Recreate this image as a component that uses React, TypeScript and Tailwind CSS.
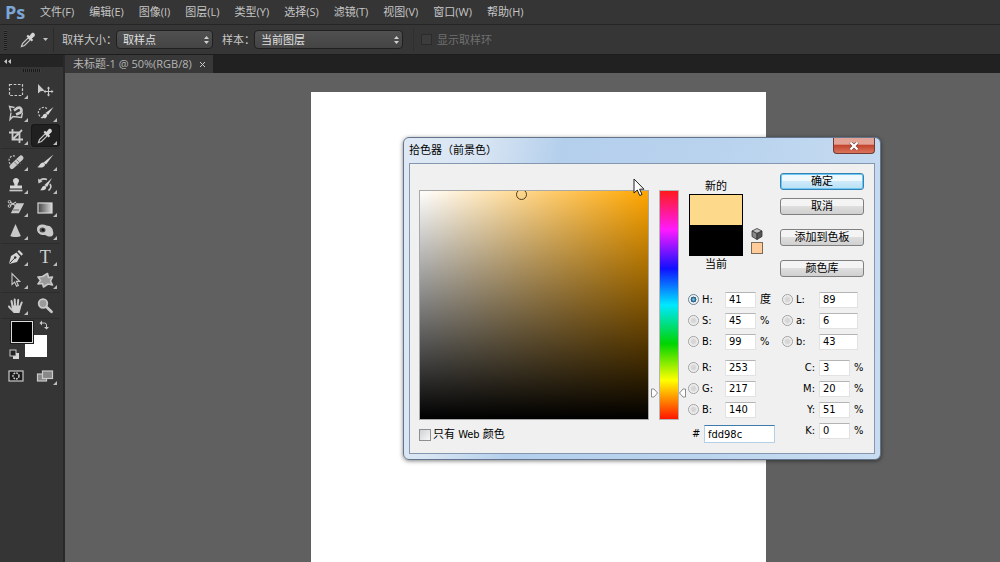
import { useState } from "react";
import type { ReactNode } from "react";

const menus = [
  "文件(F)",
  "编辑(E)",
  "图像(I)",
  "图层(L)",
  "类型(Y)",
  "选择(S)",
  "滤镜(T)",
  "视图(V)",
  "窗口(W)",
  "帮助(H)",
];

const Icon = ({ children }: { children: ReactNode }) => (
  <svg width="20" height="20" viewBox="0 0 20 20" fill="none" stroke="#c9c9c9" strokeWidth="1.4">
    {children}
  </svg>
);

const EyedropperIcon = () => (
  <Icon>
    <path d="M3.5 16.5l1-3 5.7-5.7 2 2-5.7 5.7-3 1z" strokeWidth="1.2" />
    <path d="M8.5 6.2l1.4-1.4 1.5 1.2 2.2-2.8c1.8-1.3 4.3 1.1 2.9 3l-2.6 2.3 1.2 1.5-1.4 1.4z" fill="#d6d6d6" stroke="none" />
  </Icon>
);

const toolGroups: { name: string; corner?: boolean; active?: boolean; icon: ReactNode }[][] = [
  [
    {
      name: "矩形选框工具",
      corner: true,
      icon: (
        <Icon>
          <rect x="3.5" y="4.5" width="13" height="11" strokeDasharray="2.6 1.6" strokeWidth="1.2" />
        </Icon>
      ),
    },
    {
      name: "移动工具",
      icon: (
        <Icon>
          <path d="M3 4v9.5l2.6-2.2 4-.6z" fill="#c9c9c9" stroke="none" />
          <path d="M13.5 7.5v8M9.5 11.5h8" strokeWidth="1.1" />
          <path d="M11.8 8.5l1.7-2 1.7 2zM11.8 14.5l1.7 2 1.7-2zM10.5 9.8l-2 1.7 2 1.7zM16.5 9.8l2 1.7-2 1.7z" fill="#c9c9c9" stroke="none" />
        </Icon>
      ),
    },
    {
      name: "磁性套索工具",
      corner: true,
      icon: (
        <Icon>
          <path d="M8.500 4.500L3.500 3.500l1.500 5M5 9.500L4 16.500l3-3 8.500 1 1-5" />
          <path d="M8 7.500l3.500-2.500c3.500-1.500 5.500 3 2.500 4.800L10 11.500" strokeWidth="2.600" />
        </Icon>
      ),
    },
    {
      name: "快速选择工具",
      corner: true,
      icon: (
        <Icon>
          <path d="M12 5.5C8 2.5 2.5 6 3.5 10.5S9 16 11 14" strokeDasharray="2 1.4" strokeWidth="1.2" />
          <path d="M18.5 4L13 12l-2.500-2z" fill="#d6d6d6" stroke="none" />
          <path d="M6 14.8c2 0 1.3-4.8 4.8-4 2.700 1 1.600 5.300-4.800 4z" fill="#d6d6d6" stroke="none" />
        </Icon>
      ),
    },
    {
      name: "裁剪工具",
      corner: true,
      icon: (
        <Icon>
          <path d="M6.5 3v10.5H17M3 6.5h10.5V17M6.5 13.5L16 4" strokeWidth="1.8" />
        </Icon>
      ),
    },
    { name: "吸管工具", corner: true, active: true, icon: <EyedropperIcon /> },
  ],
  [
    {
      name: "污点修复画笔工具",
      corner: true,
      icon: (
        <Icon>
          <path d="M9 4C4 3 1.5 8 4 12" strokeDasharray="2 1.4" strokeWidth="1.1" />
          <path d="M6 14.5L15 6" strokeWidth="5" strokeLinecap="round" />
          <path d="M8 9.5l4 4M10.5 7.5l4 4" stroke="#777777" strokeWidth="1" />
        </Icon>
      ),
    },
    {
      name: "画笔工具",
      corner: true,
      icon: (
        <Icon>
          <path d="M18.5 2.5l-7.500 10-2.500-2z" fill="#d6d6d6" stroke="none" />
          <path d="M2 15c3 0 2.500-4.800 6.500-4.500 3.500 1.800.8 6.700-6.500 4.500z" fill="#d6d6d6" stroke="none" />
        </Icon>
      ),
    },
    {
      name: "仿制图章工具",
      corner: true,
      icon: (
        <Icon>
          <path d="M8.5 10.5C8.6 8 6.8 7.5 7 5.5 7.2 2 12.8 2 13 5.5c.2 2-1.6 2.500-1.500 5h4.500v3H4v-3z" fill="#d6d6d6" stroke="none" />
          <path d="M3.5 15.500h13" strokeWidth="1.700" />
        </Icon>
      ),
    },
    {
      name: "历史记录画笔工具",
      corner: true,
      icon: (
        <Icon>
          <path d="M17 3l-5 9-2.500-2z" fill="#d6d6d6" stroke="none" />
          <path d="M4.5 15c2.500 0 2-4.800 5.500-4.300 2.600 1.300 1 5.800-5.500 4.300z" fill="#d6d6d6" stroke="none" />
          <path d="M4 7c1.5-3 5-3.5 8-2.5M15 9c1.5 2.5.5 5-1.5 6.5" strokeWidth="1.6" />
          <path d="M3 3.5l.5 5 4-2z" fill="#c9c9c9" stroke="none" />
        </Icon>
      ),
    },
    {
      name: "背景橡皮擦工具",
      corner: true,
      icon: (
        <Icon>
          <path d="M10.5 6H17l-4.500 8.500H6z" fill="#c9c9c9" />
          <path d="M7 12h6" stroke="#666666" strokeWidth="1" />
          <path d="M4 7.500L10 4M4 4l6 4" strokeWidth="1.100" />
          <circle cx="3.5" cy="3.8" r="1.3" strokeWidth="1" />
          <circle cx="3.5" cy="8" r="1.3" strokeWidth="1" />
        </Icon>
      ),
    },
    {
      name: "渐变工具",
      corner: true,
      icon: (
        <Icon>
          <defs>
            <linearGradient id="toolGradient">
              <stop offset="0" stopColor="#444444" />
              <stop offset="1" stopColor="#d8d8d8" />
            </linearGradient>
          </defs>
          <rect x="3" y="5" width="14" height="10" fill="url(#toolGradient)" stroke="#d8d8d8" strokeWidth="1.2" />
        </Icon>
      ),
    },
    {
      name: "锐化工具",
      corner: true,
      icon: (
        <Icon>
          <path d="M9.5 3L14.800 15c-2 1.400-8.400 1.400-10.500 0z" fill="#c9c9c9" stroke="none" />
        </Icon>
      ),
    },
    {
      name: "海绵工具",
      corner: true,
      icon: (
        <Icon>
          <path d="M2 8C2 3.500 8 2.500 11.500 4.500c4 0 6.500 3 6.500 6 1 3-.5 5-3 5-2 .5-3-1-5-1.500C6 14.500 2 12.500 2 8z" fill="#c9c9c9" stroke="none" />
          <ellipse cx="7.500" cy="9" rx="3" ry="2.500" fill="#4a4a4a" stroke="none" />
          <circle cx="8" cy="9" r="1.300" fill="#161616" stroke="none" />
        </Icon>
      ),
    },
  ],
  [
    {
      name: "钢笔工具",
      corner: true,
      icon: (
        <Icon>
          <path d="M3 17l2-8 5.5-3.5 3.500 4L11 15z" fill="#d6d6d6" stroke="none" />
          <path d="M11.5 4.500L13 3l4 4-1.500 1.800z" fill="#d6d6d6" stroke="none" />
          <path d="M3.5 16.500L9 10.800" stroke="#333333" strokeWidth="1" />
          <circle cx="9.200" cy="10.500" r="1.200" fill="#333333" stroke="none" />
        </Icon>
      ),
    },
    {
      name: "横排文字工具",
      corner: true,
      icon: <span className="font-['Liberation_Serif',serif] text-[18px] leading-5 text-[#d0d0d0]">T</span>,
    },
    {
      name: "直接选择工具",
      corner: true,
      icon: (
        <Icon>
          <path d="M6 3.5v11l2.6-2.4 2 4.2 1.8-.9-2-4h3.4z" strokeWidth="1.1" />
        </Icon>
      ),
    },
    {
      name: "自定形状工具",
      corner: true,
      icon: (
        <Icon>
          <path d="M7.5 6.500L12.500 3.500l1 4 4-.5-2 4 2 4-4.500-1-4.500 3-1-3.500-4.500.5 2.500-3.500L3 7z" fill="#999999" strokeWidth="1.600" strokeLinejoin="round" />
        </Icon>
      ),
    },
  ],
  [
    {
      name: "抓手工具",
      corner: true,
      icon: (
        <Icon>
          <path d="M8 16c-1.5-2-4-3.500-5-5.500" strokeWidth="2" strokeLinecap="round" />
          <path d="M6.500 10L5.500 5M9 9.500L8.700 3.500M11.700 9.500l.5-5.500M14.200 10.500l1.500-4" strokeWidth="2" strokeLinecap="round" />
          <path d="M5.500 9.500h9.500c.3 3-1 4.500-1.500 7.500H8c-.5-2-2.500-3-2.500-7.500z" fill="#d0d0d0" stroke="none" />
        </Icon>
      ),
    },
    {
      name: "缩放工具",
      icon: (
        <Icon>
          <circle cx="8" cy="7.500" r="4.300" fill="#9a9a9a" strokeWidth="1.800" />
          <path d="M11.500 11l5 4.800" strokeWidth="2.800" strokeLinecap="round" />
        </Icon>
      ),
    },
  ],
];

const Corner = () => (
  <span className="absolute right-[3px] bottom-[2px] border-[2px] border-transparent border-r-[#bdbdbd] border-b-[#bdbdbd]" />
);

const ToolsPanel = () => (
  <aside className="flex w-[65px] shrink-0 flex-col border-r-2 border-[#292929] bg-[#353535]">
    <button type="button" aria-label="折叠面板" className="flex h-3 items-center bg-[#242424] pl-1">
      <svg width="7" height="5" viewBox="0 0 7 5" fill="#c4c4c4">
        <path d="M3 0v5L0 2.500zM7 0v5L4 2.500z" />
      </svg>
    </button>
    <div className="mx-auto mt-[2px] mb-[6px] h-[3px] w-[18px] bg-[repeating-linear-gradient(90deg,#181818_0_1px,#3d3d3d_1px_2px)]" />
    <div className="flex flex-col gap-px pr-[3px] pl-px">
      {toolGroups.map((group, i) => (
        <div key={i} className="grid grid-cols-2 border-b border-[#2c2c2c] pb-px">
          {group.map((tool) => (
            <button
              key={tool.name}
              type="button"
              title={tool.name}
              className={
                tool.active
                  ? "relative flex h-[23px] items-center justify-center rounded-sm bg-[#202020] inset-ring inset-ring-[#171717]"
                  : "relative flex h-[23px] items-center justify-center"
              }
            >
              {tool.icon}
              {tool.corner && <Corner />}
            </button>
          ))}
        </div>
      ))}
    </div>
    <div className="relative mt-px ml-[9px] h-[40px] w-[40px]">
      <button type="button" aria-label="背景色" className="absolute top-[15px] left-4 size-[22px] bg-white" />
      <button
        type="button"
        aria-label="前景色"
        className="absolute top-px left-[2px] size-[22px] border border-[#dcdcdc] bg-black outline outline-[#1c1c1c]"
      />
      <button type="button" aria-label="切换前景色和背景色" className="absolute top-0 right-0">
        <svg width="10" height="10" viewBox="0 0 10 10" fill="none" stroke="#c9c9c9">
          <path d="M2 3h3.500q2 0 2 2v3" />
          <path d="M3 .5L.5 3 3 5.500zM5 7l2.500 2.500L10 7z" fill="#c9c9c9" stroke="none" />
        </svg>
      </button>
      <button type="button" aria-label="默认颜色" className="absolute bottom-0 left-0">
        <svg width="11" height="11" viewBox="0 0 11 11">
          <rect x="4" y="4" width="6" height="6" fill="#d8d8d8" />
          <rect x="1" y="1" width="6" height="6" fill="#222222" stroke="#c9c9c9" />
        </svg>
      </button>
    </div>
    <div className="mt-[5px] grid grid-cols-2 pr-[3px] pl-px">
      <button type="button" title="快速蒙版" className="flex h-[22px] items-center justify-center">
        <Icon>
          <rect x="3" y="5" width="14" height="10" fill="#1c1c1c" strokeWidth="1.2" />
          <circle cx="10" cy="10" r="3" strokeDasharray="1.8 1" strokeWidth="1.5" />
        </Icon>
      </button>
      <button type="button" title="屏幕模式" className="relative flex h-[22px] items-center justify-center">
        <Icon>
          <rect x="2.5" y="8" width="9" height="7" fill="#888888" strokeWidth="1.2" />
          <rect x="7.5" y="5" width="10" height="7.5" fill="#888888" strokeWidth="1.2" />
        </Icon>
        <Corner />
      </button>
    </div>
  </aside>
);

const Spinner = () => (
  <svg className="pointer-events-none absolute top-[6px] right-1" width="5" height="8" viewBox="0 0 5 8" fill="#d0d0d0">
    <path d="M0 3l2.5-3L5 3zM0 5l2.5 3L5 5z" />
  </svg>
);

const OptionsBar = () => (
  <div className="flex h-[31px] items-center border-y border-t-[#252525] border-b-[#1d1d1d] bg-[#363636] pl-1 whitespace-nowrap text-[#c8c8c8]">
    <span className="h-5 w-[3px] bg-[repeating-linear-gradient(0deg,#1c1c1c_0_1px,#404040_1px_2px)]" />
    <button type="button" aria-label="吸管工具预设" className="ml-[11px] flex items-center">
      <EyedropperIcon />
      <svg className="ml-[5px]" width="5" height="3" viewBox="0 0 5 3" fill="#c4c4c4">
        <path d="M0 0h5L2.5 3z" />
      </svg>
    </button>
    <span className="ml-[5px] h-6 w-px bg-[#2a2a2a]" />
    <label htmlFor="sampleSize" className="ml-2 w-[54px]">
      取样大小：
    </label>
    <div className="relative">
      <select
        id="sampleSize"
        className="h-[19px] w-[97px] appearance-none rounded-sm border border-[#202020] bg-linear-to-b from-[#505050] to-[#444444] px-[6px] text-[#e0e0e0]"
      >
        <option>取样点</option>
      </select>
      <Spinner />
    </div>
    <label htmlFor="sample" className="ml-[9px] w-8">
      样本：
    </label>
    <div className="relative">
      <select
        id="sample"
        className="h-[19px] w-[149px] appearance-none rounded-sm border border-[#202020] bg-linear-to-b from-[#505050] to-[#444444] px-[6px] text-[#e0e0e0]"
      >
        <option>当前图层</option>
      </select>
      <Spinner />
    </div>
    <span className="ml-[10px] h-6 w-px bg-[#2f2f2f]" />
    <label className="ml-[7px] flex items-center gap-[5px] text-[#707070]">
      <input type="checkbox" disabled className="size-[11px] appearance-none border border-[#2b2b2b] bg-[#3c3c3c]" />
      显示取样环
    </label>
  </div>
);

type Channel = { id: string; label: string; value: string; unit?: string; radio?: boolean };

const leftGroups: Channel[][] = [
  [
    { id: "hue", label: "H:", value: "41", unit: "度", radio: true },
    { id: "sat", label: "S:", value: "45", unit: "%", radio: true },
    { id: "bri", label: "B:", value: "99", unit: "%", radio: true },
  ],
  [
    { id: "red", label: "R:", value: "253", radio: true },
    { id: "green", label: "G:", value: "217", radio: true },
    { id: "blue", label: "B:", value: "140", radio: true },
  ],
];

const labChannels: Channel[] = [
  { id: "labL", label: "L:", value: "89", radio: true },
  { id: "labA", label: "a:", value: "6", radio: true },
  { id: "labB", label: "b:", value: "43", radio: true },
];

const cmykChannels: Channel[] = [
  { id: "cyan", label: "C:", value: "3", unit: "%" },
  { id: "magenta", label: "M:", value: "20", unit: "%" },
  { id: "yellow", label: "Y:", value: "51", unit: "%" },
  { id: "key", label: "K:", value: "0", unit: "%" },
];

const ChannelRow = ({
  channel,
  selected,
  onSelect,
  wide,
}: {
  channel: Channel;
  selected: string;
  onSelect: (id: string) => void;
  wide?: boolean;
}) => (
  <div className="flex h-[21px] items-center">
    {channel.radio && (
      <input
        type="radio"
        name="channel"
        aria-label={channel.label}
        checked={selected === channel.id}
        onChange={() => onSelect(channel.id)}
        className="mr-[3px] size-[11px] appearance-none rounded-full border border-[#a0a0a0] bg-[radial-gradient(#d6d6d6_30%,#f6f6f6_70%)] checked:border-[#6d8295] checked:bg-[radial-gradient(circle,#6fc3ea_0_8%,#1d4566_42%,#eef4f8_50%)]"
      />
    )}
    <label htmlFor={channel.id} className={channel.radio ? "w-[23px]" : "w-[27px] pr-[4px] text-right"}>
      {channel.label}
    </label>
    <input
      id={channel.id}
      defaultValue={channel.value}
      className={
        wide
          ? "h-4 w-[39px] border border-[#e2e2e2] border-t-[#b4b4b4] bg-white pl-[3px]"
          : "h-4 w-[31px] border border-[#e2e2e2] border-t-[#b4b4b4] bg-white pl-[3px]"
      }
    />
    {channel.unit && <span className="ml-1">{channel.unit}</span>}
  </div>
);

const dialogButton =
  "h-[17px] w-[84px] rounded-[3px] border border-[#808080] bg-linear-to-b from-[#f4f4f4] from-45% via-[#dedede] via-50% to-[#d0d0d0] leading-4";

const ColorPicker = () => {
  const [selected, setSelected] = useState("hue");
  const [hex, setHex] = useState("fdd98c");

  return (
    <section
      role="dialog"
      aria-labelledby="pickerTitle"
      className="absolute top-[64px] left-[338px] rounded-[6px] border border-[#62758c] bg-[linear-gradient(100deg,#dfe9f5_0%,#d8e5f3_15%,#b4cfec_30%,#b9d3ee_60%,#c8dcf1_100%)] px-[5px] pb-[5px] font-['DejaVu_Sans_Condensed','Noto_Sans_CJK_SC',sans-serif] text-black shadow-[0_1px_4px_rgba(0,0,0,0.5)]"
    >
      <header className="flex h-[25px] items-start justify-between">
        <h1 id="pickerTitle" className="leading-[26px]">
          拾色器（前景色）
        </h1>
        <button
          type="button"
          aria-label="关闭"
          className="flex h-4 w-[42px] items-center justify-center rounded-b-[4px] border border-t-0 border-[#713a35] bg-linear-to-b from-[#e3a498] from-40% via-[#c4452e] via-50% to-[#d9755c]"
        >
          <svg width="10" height="8" viewBox="0 0 10 8" stroke="#ffffff" strokeWidth="2.2">
            <path d="M1.5 .5l7 7M8.5 .5l-7 7" stroke="#6b4742" strokeWidth="3.4" />
            <path d="M1.5 .5l7 7M8.5 .5l-7 7" />
          </svg>
        </button>
      </header>

      <div className="flex h-[291px] w-[466px] items-start border border-[#8497ae] bg-[#f0f0f0] pl-[9px]">
        <div className="pt-[26px]">
          <div className="relative size-[230px] overflow-hidden border border-[#a9a9a9] bg-[linear-gradient(to_top,#000,transparent),linear-gradient(to_right,#fff,#ffa600)]">
            <span className="absolute -top-[2px] left-24 size-[11px] rounded-full border border-[#4c3a1c]" />
          </div>
          <label className="mt-2 flex h-[13px] items-center gap-[2px]">
            <input
              type="checkbox"
              className="size-3 appearance-none border border-[#8e8f8f] bg-linear-to-br from-[#cfd2d6] to-[#f7f7f7]"
            />
            只有 Web 颜色
          </label>
        </div>

        <div className="relative mt-[26px] ml-[10px] h-[230px] w-5 border border-[#b5b5b5] bg-[linear-gradient(to_bottom,#ff1a1a_0%,#ff1aff_17%,#1010ff_34%,#00e8ff_50%,#00d400_67%,#ffff00_83%,#ff1500_100%)]">
          <svg className="absolute top-[197px] -left-[9px]" width="7" height="10" viewBox="0 0 7 10" fill="#ffffff" stroke="#8c8c8c">
            <path d="M.5 1H3l3.500 4L3 9H.5z" />
          </svg>
          <svg className="absolute top-[197px] -right-[8px]" width="7" height="10" viewBox="0 0 7 10" fill="#ffffff" stroke="#8c8c8c">
            <path d="M6.5 1H4L.5 5 4 9h2.500z" />
          </svg>
        </div>

        <div className="ml-[9px] pt-[9px]">
          <div className="flex h-[116px] items-start">
            <div className="mt-[5px] flex w-[56px] flex-col text-center leading-[18px]">
              <span className="h-4">新的</span>
              <div className="mx-px h-[62px] border border-black bg-black">
                <div className="h-[30px] bg-[#fdd98c]" />
              </div>
              <span className="h-4">当前</span>
            </div>
            <div className="mt-[55px] ml-[7px] flex w-3 flex-col items-center gap-[2px]">
              <svg width="12" height="12" viewBox="0 0 12 12" stroke="#333333" strokeWidth=".8">
                <path d="M1 3l5-2.500L11 3 6 5.500z" fill="#c2c2c2" />
                <path d="M1 3l5 2.500v6L1 8.500z" fill="#888888" />
                <path d="M11 3L6 5.500v6l5-3z" fill="#555555" />
              </svg>
              <button type="button" aria-label="Web 安全颜色" className="size-3 border border-[#7a6a58] bg-[#ffcc99]" />
            </div>
            <div className="ml-[17px] flex flex-col gap-[14px]">
              <div className="flex flex-col gap-2">
                <button
                  type="button"
                  className="h-[17px] w-[84px] rounded-[3px] border border-[#3482b5] bg-linear-to-b from-[#eef8fd] from-45% via-[#cdeafa] via-50% to-[#b9e0f5] leading-4 inset-ring inset-ring-[#6cc8f0]"
                >
                  确定
                </button>
                <button type="button" className={dialogButton}>
                  取消
                </button>
              </div>
              <button type="button" className={dialogButton}>
                添加到色板
              </button>
              <button type="button" className={dialogButton}>
                颜色库
              </button>
            </div>
          </div>

          <div className="flex items-start">
            <div className="flex w-[94px] flex-col gap-[5px]">
              {leftGroups.map((group, i) => (
                <div key={i}>
                  {group.map((channel) => (
                    <ChannelRow key={channel.id} channel={channel} selected={selected} onSelect={setSelected} />
                  ))}
                </div>
              ))}
              <div className="flex items-center pl-1">
                <label htmlFor="hex" className="w-3">
                  #
                </label>
                <input
                  id="hex"
                  value={hex}
                  onChange={(e) => setHex(e.target.value)}
                  autoFocus
                  className="h-[18px] w-[71px] shrink-0 border border-[#b5cfe7] border-t-[#3d7bad] bg-white pl-[3px] outline-none"
                />
              </div>
            </div>
            <div className="flex flex-col gap-[5px]">
              <div>
                {labChannels.map((channel) => (
                  <ChannelRow key={channel.id} channel={channel} selected={selected} onSelect={setSelected} wide />
                ))}
              </div>
              <div className="pl-[10px]">
                {cmykChannels.map((channel) => (
                  <ChannelRow key={channel.id} channel={channel} selected={selected} onSelect={setSelected} />
                ))}
              </div>
            </div>
          </div>
        </div>
      </div>

      <svg className="absolute top-10 left-[229px]" width="12" height="19" viewBox="0 0 12 19" fill="#ffffff" stroke="#222222">
        <path d="M1 1v14l3.3-3 2.4 5.5 2.3-1-2.4-5.3H11z" />
      </svg>
    </section>
  );
};

const App = () => {
  return (
    <div className="flex min-h-screen flex-col bg-[#606060] font-['Open_Sans','Noto_Sans_CJK_SC',sans-serif] text-[11px] leading-4">
      <nav className="flex h-6 items-center bg-[#353535] pl-[5px] text-[#c6c6c6]">
        <span className="w-[35px] font-['Open_Sans',sans-serif] text-[18px] leading-5 font-bold text-[#7ba6d6]">Ps</span>
        <div className="flex gap-[15px]">
          {menus.map((menu) => (
            <button key={menu} type="button">
              {menu}
            </button>
          ))}
        </div>
      </nav>
      <OptionsBar />
      <div className="flex flex-1">
        <ToolsPanel />
        <main className="flex min-w-0 flex-1 flex-col">
          <div className="flex h-[18px] bg-[#212121]">
            <div className="flex items-center gap-2 bg-[#383838] px-2 text-[#b4b4b4]">
              <span>未标题-1 @ 50%(RGB/8)</span>
              <button type="button" aria-label="关闭文档">
                <svg width="5" height="5" viewBox="0 0 5 5" stroke="#cccccc">
                  <path d="M0 0l5 5M5 0L0 5" />
                </svg>
              </button>
            </div>
          </div>
          <div className="relative flex flex-1 justify-center pt-[19px] pl-3">
            <div className="w-[455px] bg-white" />
            <ColorPicker />
          </div>
        </main>
      </div>
    </div>
  );
};

export default App;
